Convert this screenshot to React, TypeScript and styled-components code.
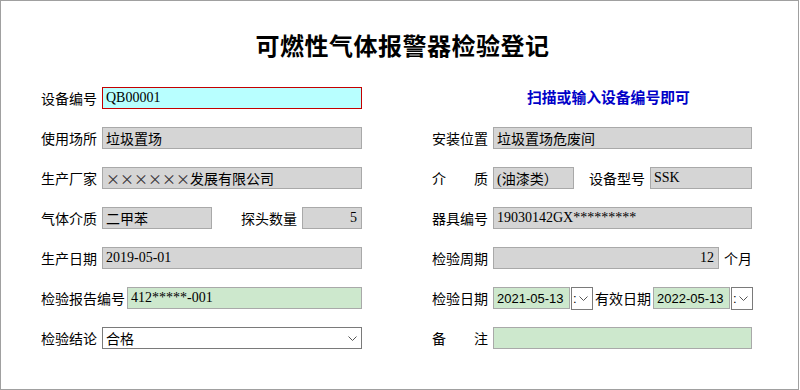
import React from 'react';
import styled, { createGlobalStyle } from 'styled-components';

type Tone = 'gray' | 'green' | 'cyan' | 'white';

const tones: Record<Tone, { bg: string; border: string }> = {
  gray: { bg: '#d5d5d5', border: '#a9a9a9' },
  green: { bg: '#cde8cd', border: '#a9a9a9' },
  cyan: { bg: '#b8ffff', border: '#c40000' },
  white: { bg: '#ffffff', border: '#7a7a7a' },
};

const GlobalStyle = createGlobalStyle`
  html, body {
    margin: 0;
    padding: 0;
    background: #fff;
  }
  body {
    font-family: "Noto Sans CJK SC", sans-serif;
  }
`;

const Chevron: React.FC = () => (
  <svg width="9" height="5" viewBox="0 0 9 5">
    <polyline points="0.5,0.5 4.5,4.5 8.5,0.5" fill="none" stroke="#555" strokeWidth="1" />
  </svg>
);

const SpreadLabel: React.FC<{ text: string }> = ({ text }) => (
  <Label $spread>
    {[...text].map((c, i) => (
      <span key={i}>{c}</span>
    ))}
  </Label>
);

const DatePicker: React.FC<{ value: string }> = ({ value }) => (
  <Picker>
    <DateField $tone="green" $w={77}>
      {value}
    </DateField>
    <DropBtn>
      <span>:</span>
      <Chevron />
    </DropBtn>
  </Picker>
);

const App: React.FC = () => {
  return (
    <>
      <GlobalStyle />
      <Frame>
        <Title>可燃性气体报警器检验登记</Title>

        <FormGrid>
          <Row>
            <Label>设备编号</Label>
            <Field $tone="cyan">QB00001</Field>
          </Row>
          <Row>
            <Hint>扫描或输入设备编号即可</Hint>
          </Row>

          <Row>
            <Label>使用场所</Label>
            <Field $tone="gray">垃圾置场</Field>
          </Row>
          <Row>
            <Label>安装位置</Label>
            <Field $tone="gray">垃圾置场危废间</Field>
          </Row>

          <Row>
            <Label>生产厂家</Label>
            <Field $tone="gray">
              {Array.from({ length: 6 }).map((_, i) => (
                <Cross key={i}>×</Cross>
              ))}
              发展有限公司
            </Field>
          </Row>
          <Row>
            <SpreadLabel text="介质" />
            <Field $tone="gray" $w={81}>
              (油漆类）
            </Field>
            <Label $ml={10}>设备型号</Label>
            <Field $tone="gray">SSK</Field>
          </Row>

          <Row>
            <Label>气体介质</Label>
            <Field $tone="gray" $w={110}>
              二甲苯
            </Field>
            <Label $ml={24}>探头数量</Label>
            <Field $tone="gray" $align="end">
              5
            </Field>
          </Row>
          <Row>
            <Label>器具编号</Label>
            <Field $tone="gray">19030142GX*********</Field>
          </Row>

          <Row>
            <Label>生产日期</Label>
            <Field $tone="gray">2019-05-01</Field>
          </Row>
          <Row>
            <Label>检验周期</Label>
            <Field $tone="gray" $align="end">
              12
            </Field>
            <Label>个月</Label>
          </Row>

          <Row $gap={2}>
            <Label>检验报告编号</Label>
            <Field $tone="green">412*****-001</Field>
          </Row>
          <Row $gap={2}>
            <Label $mr={3}>检验日期</Label>
            <DatePicker value="2021-05-13" />
            <Label>有效日期</Label>
            <DatePicker value="2022-05-13" />
          </Row>

          <Row>
            <Label>检验结论</Label>
            <Select>
              <span>合格</span>
              <Chevron />
            </Select>
          </Row>
          <Row>
            <SpreadLabel text="备注" />
            <Field $tone="green" />
          </Row>
        </FormGrid>
      </Frame>
    </>
  );
};

const Frame = styled.section`
  box-sizing: border-box;
  width: 799px;
  height: 390px;
  border: 1px solid #a0a0a0;
  padding-top: 32px;
  background: #fff;
`;

const Title = styled.h1`
  margin: 0;
  padding-left: 6px;
  height: 24px;
  line-height: 24px;
  text-align: center;
  font-family: "Noto Sans CJK SC", sans-serif;
  font-size: 24px;
  font-weight: 700;
  letter-spacing: 0.5px;
  color: #000;
`;

const FormGrid = styled.div`
  display: grid;
  grid-template-columns: 321px 320px;
  grid-auto-rows: 22px;
  column-gap: 70px;
  row-gap: 18px;
  margin-top: 30px;
  padding-left: 40px;
`;

const Row = styled.div<{ $gap?: number }>`
  display: flex;
  align-items: center;
  gap: ${(p) => p.$gap ?? 5}px;
  height: 22px;
  min-width: 0;
`;

const Label = styled.span<{ $spread?: boolean; $ml?: number; $mr?: number }>`
  flex: none;
  font-family: "Noto Sans CJK SC", sans-serif;
  font-size: 14px;
  line-height: 22px;
  color: #000;
  white-space: nowrap;
  margin-left: ${(p) => p.$ml ?? 0}px;
  margin-right: ${(p) => p.$mr ?? 0}px;
  ${(p) =>
    p.$spread &&
    `
    display: flex;
    justify-content: space-between;
    width: 56px;
  `}
`;

const Field = styled.div<{ $tone: Tone; $w?: number; $align?: 'start' | 'end' }>`
  box-sizing: border-box;
  flex: ${(p) => (p.$w ? `0 0 ${p.$w}px` : '1 1 0')};
  min-width: 0;
  height: 22px;
  display: flex;
  align-items: center;
  justify-content: ${(p) => (p.$align === 'end' ? 'flex-end' : 'flex-start')};
  padding: 0 4px 0 3px;
  background: ${(p) => tones[p.$tone].bg};
  border: 1px solid ${(p) => tones[p.$tone].border};
  font-family: "Liberation Serif", "Noto Sans CJK SC", serif;
  font-size: 14px;
  color: #000;
  white-space: nowrap;
  overflow: hidden;
`;

const Cross = styled.span`
  display: inline-block;
  width: 14px;
  text-align: center;
  font-family: "Noto Sans CJK SC", sans-serif;
  font-size: 14px;
  color: #333;
`;

const Hint = styled.span`
  padding-left: 95px;
  margin-top: -4px;
  font-family: "Noto Sans CJK SC", sans-serif;
  font-size: 14.8px;
  font-weight: 700;
  color: #0000c8;
  white-space: nowrap;
`;

const Picker = styled.div`
  display: flex;
  align-items: center;
  flex: none;
`;

const DateField = styled(Field)`
  font-family: "Liberation Sans", "Noto Sans", sans-serif;
  font-size: 13px;
  padding-left: 3px;
`;

const DropBtn = styled.div`
  box-sizing: border-box;
  width: 22px;
  height: 23px;
  margin-left: 1px;
  display: flex;
  align-items: center;
  gap: 2px;
  padding-left: 1px;
  background: #fff;
  border: 1px solid #7a7a7a;
  font-family: "Liberation Sans", sans-serif;
  font-size: 13px;
  color: #000;
`;

const Select = styled.div`
  box-sizing: border-box;
  flex: 1 1 0;
  height: 22px;
  display: flex;
  align-items: center;
  justify-content: space-between;
  padding: 0 4px 0 3px;
  background: #fff;
  border: 1px solid #7a7a7a;
  font-family: "Noto Sans CJK SC", sans-serif;
  font-size: 14px;
  color: #000;
`;

export default App;
